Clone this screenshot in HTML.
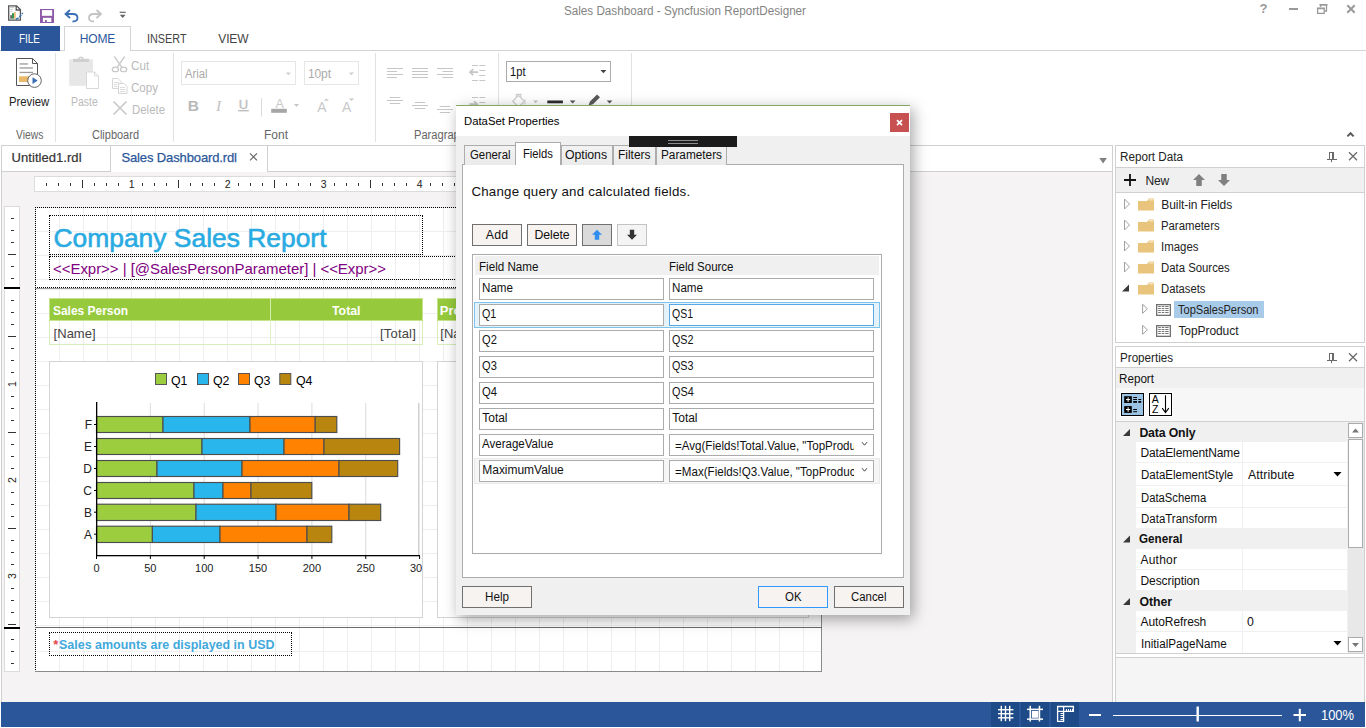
<!DOCTYPE html>
<html><head><meta charset="utf-8"><title>Sales Dashboard - Syncfusion ReportDesigner</title>
<style>
html,body{margin:0;padding:0;}
body{width:1366px;height:728px;overflow:hidden;position:relative;background:#fff;font-family:"Liberation Sans", sans-serif;}
div,svg,span.t{position:absolute;box-sizing:border-box;}
span.t{white-space:pre;}
svg{overflow:visible;}
</style></head><body>
<span class="t" style="left:564.00px;top:3.00px;font-size:12px;line-height:17px;color:#848484;transform:scaleX(0.9727);transform-origin:0 0;">Sales Dashboard - Syncfusion ReportDesigner</span>
<div style="left:0px;top:50px;width:1366px;height:1px;background:#d4d4d4;"></div>
<div style="left:1px;top:26px;width:59px;height:25px;background:#2b579a;"></div>
<span class="t" style="left:19.30px;top:31.00px;font-size:12px;line-height:17px;color:#fff;transform:scaleX(0.8286);transform-origin:0 0;">FILE</span>
<div style="left:64px;top:26px;width:67px;height:25px;background:#fff;border:1px solid #d4d4d4;border-bottom:none;"></div>
<span class="t" style="left:79.70px;top:31.00px;font-size:12px;line-height:17px;color:#2b579a;letter-spacing:-0.125px;">HOME</span>
<span class="t" style="left:147.00px;top:31.00px;font-size:12px;line-height:17px;color:#444;transform:scaleX(0.9019);transform-origin:0 0;">INSERT</span>
<span class="t" style="left:218.30px;top:31.00px;font-size:12px;line-height:17px;color:#444;letter-spacing:-0.168px;">VIEW</span>
<div style="left:55px;top:53px;width:1px;height:89px;background:#e1e1e1;"></div>
<div style="left:173px;top:53px;width:1px;height:89px;background:#e1e1e1;"></div>
<div style="left:375px;top:53px;width:1px;height:89px;background:#e1e1e1;"></div>
<div style="left:498px;top:53px;width:1px;height:89px;background:#e1e1e1;"></div>
<div style="left:631px;top:53px;width:1px;height:89px;background:#e1e1e1;"></div>
<span class="t" style="left:9.00px;top:94.00px;font-size:12px;line-height:17px;color:#222;transform:scaleX(0.9417);transform-origin:0 0;">Preview</span>
<span class="t" style="left:15.50px;top:127.00px;font-size:12px;line-height:17px;color:#666;transform:scaleX(0.8586);transform-origin:0 0;">Views</span>
<span class="t" style="left:70.80px;top:94.00px;font-size:12px;line-height:17px;color:#bababa;transform:scaleX(0.8701);transform-origin:0 0;">Paste</span>
<span class="t" style="left:131.00px;top:58.00px;font-size:12px;line-height:17px;color:#bababa;transform:scaleX(0.9739);transform-origin:0 0;">Cut</span>
<span class="t" style="left:131.00px;top:80.00px;font-size:12px;line-height:17px;color:#bababa;transform:scaleX(0.9637);transform-origin:0 0;">Copy</span>
<span class="t" style="left:131.80px;top:102.00px;font-size:12px;line-height:17px;color:#bababa;transform:scaleX(0.9514);transform-origin:0 0;">Delete</span>
<span class="t" style="left:92.00px;top:127.00px;font-size:12px;line-height:17px;color:#666;transform:scaleX(0.9148);transform-origin:0 0;">Clipboard</span>
<span class="t" style="left:263.99px;top:127.00px;font-size:12px;line-height:17px;color:#666;">Font</span>
<span class="t" style="left:414.00px;top:127.00px;font-size:12px;line-height:17px;color:#666;transform:scaleX(0.9278);transform-origin:0 0;">Paragraph</span>
<div style="left:181px;top:61px;width:115px;height:24px;background:#fff;border:1px solid #e6e6e6;"></div>
<span class="t" style="left:184.70px;top:66.00px;font-size:12px;line-height:17px;color:#aaa;transform:scaleX(0.9369);transform-origin:0 0;">Arial</span>
<div style="left:304px;top:61px;width:55px;height:24px;background:#fff;border:1px solid #e6e6e6;"></div>
<span class="t" style="left:307.90px;top:66.00px;font-size:12px;line-height:17px;color:#aaa;letter-spacing:-0.090px;">10pt</span>
<div style="left:506px;top:61px;width:105px;height:21px;background:#fff;border:1px solid #ababab;"></div>
<span class="t" style="left:510.00px;top:64.00px;font-size:12px;line-height:17px;color:#111;transform:scaleX(0.9288);transform-origin:0 0;">1pt</span>
<svg style="left:0px;top:0px;" width="1366" height="728" viewBox="0 0 1366 728"><path d="M8.7 5.8 H16.6 L20.4 9.6 V20.2 H8.7 Z" fill="#fff" stroke="#555" stroke-width="1.3"/><path d="M16.2 5.8 V10 H20.4" fill="none" stroke="#555" stroke-width="1.3"/><rect x="10.2" y="7" width="3.8" height="0.9" fill="#c9c9c9"/><rect x="10.2" y="9" width="3" height="0.9" fill="#c9c9c9"/><rect x="10.2" y="11" width="2" height="0.9" fill="#c9c9c9"/><rect x="10.2" y="15.2" width="1.8" height="3.5" fill="#666"/><rect x="12" y="13.2" width="2" height="5.5" fill="#3a9256"/><rect x="14" y="12" width="1.8" height="6.7" fill="#ecc27a"/><path d="M15.8 19.3 Q19 18.5 22.8 12.8" stroke="#3b73b4" stroke-width="1.5" fill="none" stroke-dasharray="3.2 1"/><rect x="40" y="9" width="14" height="14" fill="#8e5aa8"/><rect x="41.9" y="10.1" width="10.3" height="5.7" fill="#fff"/><rect x="42.9" y="17.8" width="8.4" height="4.2" fill="#fff"/><rect x="45.1" y="20" width="1.6" height="2" fill="#7a4a94"/><path d="M70 10 L65.5 14 L70 18" fill="none" stroke="#3b6fb5" stroke-width="1.8"/><path d="M66 14 H73 Q77.5 14 77.5 18 Q77.5 21.5 72.5 21.5" fill="none" stroke="#3b6fb5" stroke-width="1.8"/><path d="M96.5 10 L101 14 L96.5 18" fill="none" stroke="#c4c4c4" stroke-width="1.8"/><path d="M100.5 14 H93.5 Q89 14 89 18 Q89 21.5 94 21.5" fill="none" stroke="#c4c4c4" stroke-width="1.8"/><rect x="119.7" y="11.7" width="6" height="1.2" fill="#666"/><path d="M119.7 14.8 H125.7 L122.7 18 Z" fill="#666"/><rect x="1289" y="8" width="9" height="2" fill="#999"/><path d="M1320.5 7 V4.8 H1326.5 V11 H1325" fill="none" stroke="#999" stroke-width="1.3"/><rect x="1319.5" y="4" width="8" height="1.5" fill="#999"/><rect x="1317.6" y="8.4" width="6.6" height="5" fill="#fff" stroke="#999" stroke-width="1.3"/><rect x="1317" y="7.6" width="7.8" height="1.6" fill="#999"/><path d="M1347.3 5.3 L1354.7 12.7 M1354.7 5.3 L1347.3 12.7" stroke="#999" stroke-width="2"/><path d="M1347.4 136.4 L1350.5 133.2 L1353.6 136.4" fill="none" stroke="#5a5a5a" stroke-width="2"/></svg>
<span class="t" style="left:1259.52px;top:0.00px;font-size:13px;line-height:18px;color:#999;font-weight:700;">?</span>
<svg style="left:0px;top:0px;" width="1366" height="728" viewBox="0 0 1366 728"><path d="M16.5 58.5 H32.5 L37.5 63.5 V85.5 H16.5 Z" fill="#fff" stroke="#555" stroke-width="1"/><path d="M32.5 58.5 V63.5 H37.5" fill="none" stroke="#555" stroke-width="1"/><rect x="19.5" y="63.3" width="8.5" height="1.3" fill="#9a9a9a"/><rect x="19.5" y="67.3" width="13.5" height="1.3" fill="#9a9a9a"/><rect x="19.5" y="71.8" width="13.5" height="1.3" fill="#9a9a9a"/><rect x="19" y="76.3" width="11" height="5.7" fill="#e8b96a"/><circle cx="34.5" cy="80.6" r="6.8" fill="#fff" stroke="#666" stroke-width="1"/><path d="M32.5 77.3 L37.7 80.6 L32.5 83.9 Z" fill="#3b6fb5"/><rect x="69.2" y="59.3" width="23.7" height="26.5" fill="#e7e7e7"/><rect x="73" y="58.8" width="16" height="3.2" fill="#cfcfcf"/><path d="M78.5 59 Q81 55.5 83.5 59" fill="none" stroke="#cfcfcf" stroke-width="1.3"/><path d="M86.5 72 H94.5 L98.5 76 V88.5 H86.5 Z" fill="#fff" stroke="#d9d9d9" stroke-width="1"/><path d="M94.5 72 V76 H98.5" fill="none" stroke="#d9d9d9" stroke-width="1"/><g fill="none" stroke="#c9c9c9" stroke-width="1.3"><path d="M114.3 56.5 L122.3 67.8 M124.7 56.5 L116.7 67.8"/><ellipse cx="115.4" cy="69.4" rx="3.1" ry="2.3"/><ellipse cx="123.6" cy="69.4" rx="3.1" ry="2.3"/></g><g fill="#fff" stroke="#d6d6d6" stroke-width="1"><path d="M112.5 78.5 H118 L121 81.5 V88.5 H112.5 Z"/><path d="M118.5 83.5 H124 L127 86.5 V93.5 H118.5 Z"/></g><g stroke="#dcdcdc" stroke-width="1"><path d="M114 82.5 H119 M114 84.5 H117 M114 86.5 H117 M120 87.5 H125 M120 89.5 H125.5 M120 91.5 H125.5"/></g><path d="M113.5 101.5 L126.5 114.5 M126.5 101.5 L113.5 114.5" stroke="#c6c6c6" stroke-width="1.5" fill="none"/><path d="M285.8 72.5 H291 L288.4 75.2 Z" fill="#d0d0d0"/><path d="M348.8 72.5 H354 L351.4 75.2 Z" fill="#d0d0d0"/><path d="M600.4 70 H606.4 L603.4 73.2 Z" fill="#444"/><rect x="261" y="98" width="1" height="18.5" fill="#dadada"/><rect x="238.2" y="110" width="10.6" height="1.4" fill="#bdbdbd"/><rect x="271.2" y="108.8" width="15.6" height="4" fill="#a6a6a6"/><path d="M293.9 104 H299.1 L296.5 106.8 Z" fill="#c4c4c4"/><path d="M323.9 100.8 H329 L326.45 98.4 Z" fill="#c8c8c8"/><path d="M348.8 98.6 H354.2 L351.5 101 Z" fill="#c8c8c8"/><rect x="387.0" y="68.0" width="16" height="1" fill="#c6c6c6"/><rect x="387.0" y="71.0" width="10" height="1" fill="#c6c6c6"/><rect x="387.0" y="74.0" width="16" height="1" fill="#c6c6c6"/><rect x="387.0" y="77.0" width="10" height="1" fill="#c6c6c6"/><rect x="412.0" y="68.0" width="16" height="1" fill="#c6c6c6"/><rect x="412.0" y="71.0" width="16" height="1" fill="#c6c6c6"/><rect x="412.0" y="74.0" width="16" height="1" fill="#c6c6c6"/><rect x="412.0" y="77.0" width="16" height="1" fill="#c6c6c6"/><rect x="437.0" y="68.0" width="16" height="1" fill="#c6c6c6"/><rect x="442.5" y="71.0" width="10.5" height="1" fill="#c6c6c6"/><rect x="437.0" y="74.0" width="16" height="1" fill="#c6c6c6"/><rect x="442.5" y="77.0" width="10.5" height="1" fill="#c6c6c6"/><rect x="389.8" y="97.0" width="10.4" height="1" fill="#c6c6c6"/><rect x="387.0" y="100.0" width="16" height="1" fill="#c6c6c6"/><rect x="389.8" y="103.0" width="10.4" height="1" fill="#c6c6c6"/><rect x="414.8" y="102.0" width="10.4" height="1" fill="#c6c6c6"/><rect x="412.0" y="105.0" width="16" height="1" fill="#c6c6c6"/><rect x="414.8" y="108.0" width="10.4" height="1" fill="#c6c6c6"/><rect x="439.8" y="106.0" width="10.4" height="1" fill="#c6c6c6"/><rect x="437.0" y="109.0" width="16" height="1" fill="#c6c6c6"/><rect x="439.8" y="112.0" width="10.4" height="1" fill="#c6c6c6"/><rect x="472" y="65" width="6" height="1" fill="#c6c6c6"/><rect x="479.3" y="65" width="6" height="1" fill="#c6c6c6"/><rect x="479.3" y="70" width="6" height="1" fill="#c6c6c6"/><rect x="479.3" y="75" width="6" height="1" fill="#c6c6c6"/><rect x="472" y="80" width="6" height="1" fill="#c6c6c6"/><rect x="479.3" y="80" width="6" height="1" fill="#c6c6c6"/><path d="M478 72.2 H471 M473.3 69.2 L470 72.2 L473.3 75.2" stroke="#c6c6c6" stroke-width="1.8" fill="none"/><rect x="472" y="97" width="6" height="1" fill="#c6c6c6"/><rect x="479.3" y="97" width="6" height="1" fill="#c6c6c6"/><rect x="479.3" y="102" width="6" height="1" fill="#c6c6c6"/><rect x="479.3" y="107" width="6" height="1" fill="#c6c6c6"/><rect x="472" y="112" width="6" height="1" fill="#c6c6c6"/><rect x="479.3" y="112" width="6" height="1" fill="#c6c6c6"/><path d="M469.5 104.2 H476.5 M474 101.2 L477.3 104.2 L474 107.2" stroke="#c6c6c6" stroke-width="1.8" fill="none"/><path d="M512.8 101.3 L518.4 95.4 L524.4 101.3 L518.6 107.4 Z" fill="none" stroke="#cfcfcf" stroke-width="1.3"/><path d="M516.4 97 V94.3 H520.9 V97.6" fill="none" stroke="#cfcfcf" stroke-width="1.2"/><path d="M524.9 99.5 V104.5" stroke="#d6d6d6" stroke-width="1.3"/><path d="M533 100.5 H538.2 L535.6 103.3 Z" fill="#c4c4c4"/><rect x="547.3" y="100.5" width="15.6" height="2.8" fill="#2e2e2e"/><path d="M569.8 100.5 H575.5 L572.65 103.4 Z" fill="#555"/><path d="M588.5 105.5 L590 101.5 L597 94.5 L600 97.2 L593 104.2 Z" fill="#5a5a5a"/><path d="M606.7 100.5 H612.4 L609.55 103.4 Z" fill="#555"/></svg>
<span class="t" style="left:187.70px;top:95.00px;font-size:15.5px;line-height:22px;color:#b8b8b8;font-weight:700;">B</span>
<span class="t" style="left:216.01px;top:95.00px;font-size:15.5px;line-height:22px;color:#c2c2c2;font-family:'Liberation Serif', serif;font-style:italic;">I</span>
<span class="t" style="left:238.80px;top:96.00px;font-size:13px;line-height:18px;color:#bdbdbd;-webkit-text-stroke:0.3px #bdbdbd;">U</span>
<span class="t" style="left:275.53px;top:95.00px;font-size:12.5px;line-height:18px;color:#c8c8c8;">A</span>
<span class="t" style="left:317.20px;top:98.00px;font-size:13.8px;line-height:19px;color:#c8c8c8;">A</span>
<span class="t" style="left:342.00px;top:98.00px;font-size:13.8px;line-height:19px;color:#c8c8c8;">A</span>
<div style="left:1px;top:145px;width:1112px;height:557px;background:#f5f3f4;border:1px solid #d0d0d0;border-bottom:none;"></div>
<div style="left:2px;top:146px;width:1110px;height:26px;background:#fff;"></div>
<div style="left:2px;top:171px;width:108px;height:1px;background:#d0d0d0;"></div>
<div style="left:110px;top:146px;width:1px;height:26px;background:#d0d0d0;"></div>
<div style="left:267px;top:146px;width:1px;height:26px;background:#d0d0d0;"></div>
<div style="left:267px;top:171px;width:845px;height:1px;background:#d0d0d0;"></div>
<span class="t" style="left:11.60px;top:149.00px;font-size:13px;line-height:18px;color:#333;letter-spacing:0.048px;-webkit-text-stroke:0.2px #333;">Untitled1.rdl</span>
<span class="t" style="left:121.40px;top:149.00px;font-size:13px;line-height:18px;color:#2b579a;letter-spacing:-0.121px;-webkit-text-stroke:0.25px #2b579a;">Sales Dashboard.rdl</span>
<div style="left:34px;top:176px;width:800px;height:16px;background:#fff;border:1px solid #dcdcdc;"></div>
<svg style="left:0px;top:0px;" width="1366" height="728" viewBox="0 0 1366 728"><rect x="46" y="183" width="1" height="3" fill="#333"/><rect x="58" y="183" width="1" height="3" fill="#333"/><rect x="70" y="183" width="1" height="3" fill="#333"/><rect x="82" y="180" width="1" height="8" fill="#333"/><rect x="94" y="183" width="1" height="3" fill="#333"/><rect x="106" y="183" width="1" height="3" fill="#333"/><rect x="118" y="183" width="1" height="3" fill="#333"/><rect x="142" y="183" width="1" height="3" fill="#333"/><rect x="154" y="183" width="1" height="3" fill="#333"/><rect x="166" y="183" width="1" height="3" fill="#333"/><rect x="178" y="180" width="1" height="8" fill="#333"/><rect x="190" y="183" width="1" height="3" fill="#333"/><rect x="202" y="183" width="1" height="3" fill="#333"/><rect x="214" y="183" width="1" height="3" fill="#333"/><rect x="238" y="183" width="1" height="3" fill="#333"/><rect x="250" y="183" width="1" height="3" fill="#333"/><rect x="262" y="183" width="1" height="3" fill="#333"/><rect x="274" y="180" width="1" height="8" fill="#333"/><rect x="286" y="183" width="1" height="3" fill="#333"/><rect x="298" y="183" width="1" height="3" fill="#333"/><rect x="310" y="183" width="1" height="3" fill="#333"/><rect x="334" y="183" width="1" height="3" fill="#333"/><rect x="346" y="183" width="1" height="3" fill="#333"/><rect x="358" y="183" width="1" height="3" fill="#333"/><rect x="370" y="180" width="1" height="8" fill="#333"/><rect x="382" y="183" width="1" height="3" fill="#333"/><rect x="394" y="183" width="1" height="3" fill="#333"/><rect x="406" y="183" width="1" height="3" fill="#333"/><rect x="430" y="183" width="1" height="3" fill="#333"/><rect x="442" y="183" width="1" height="3" fill="#333"/><rect x="454" y="183" width="1" height="3" fill="#333"/><rect x="466" y="180" width="1" height="8" fill="#333"/><rect x="478" y="183" width="1" height="3" fill="#333"/><rect x="490" y="183" width="1" height="3" fill="#333"/><rect x="502" y="183" width="1" height="3" fill="#333"/><rect x="526" y="183" width="1" height="3" fill="#333"/><rect x="538" y="183" width="1" height="3" fill="#333"/><rect x="550" y="183" width="1" height="3" fill="#333"/><rect x="562" y="180" width="1" height="8" fill="#333"/><rect x="574" y="183" width="1" height="3" fill="#333"/><rect x="586" y="183" width="1" height="3" fill="#333"/><rect x="598" y="183" width="1" height="3" fill="#333"/><rect x="622" y="183" width="1" height="3" fill="#333"/><rect x="634" y="183" width="1" height="3" fill="#333"/><rect x="646" y="183" width="1" height="3" fill="#333"/><rect x="658" y="180" width="1" height="8" fill="#333"/><rect x="670" y="183" width="1" height="3" fill="#333"/><rect x="682" y="183" width="1" height="3" fill="#333"/><rect x="694" y="183" width="1" height="3" fill="#333"/><rect x="718" y="183" width="1" height="3" fill="#333"/><rect x="730" y="183" width="1" height="3" fill="#333"/><rect x="742" y="183" width="1" height="3" fill="#333"/><rect x="754" y="180" width="1" height="8" fill="#333"/><rect x="766" y="183" width="1" height="3" fill="#333"/><rect x="778" y="183" width="1" height="3" fill="#333"/><rect x="790" y="183" width="1" height="3" fill="#333"/><rect x="814" y="183" width="1" height="3" fill="#333"/><rect x="826" y="183" width="1" height="3" fill="#333"/></svg>
<span class="t" style="left:128.78px;top:177.00px;font-size:10.5px;line-height:15px;color:#222;">1</span>
<span class="t" style="left:224.78px;top:177.00px;font-size:10.5px;line-height:15px;color:#222;">2</span>
<span class="t" style="left:320.78px;top:177.00px;font-size:10.5px;line-height:15px;color:#222;">3</span>
<span class="t" style="left:416.78px;top:177.00px;font-size:10.5px;line-height:15px;color:#222;">4</span>
<span class="t" style="left:512.78px;top:177.00px;font-size:10.5px;line-height:15px;color:#222;">5</span>
<span class="t" style="left:608.78px;top:177.00px;font-size:10.5px;line-height:15px;color:#222;">6</span>
<span class="t" style="left:704.78px;top:177.00px;font-size:10.5px;line-height:15px;color:#222;">7</span>
<span class="t" style="left:800.78px;top:177.00px;font-size:10.5px;line-height:15px;color:#222;">8</span>
<div style="left:4px;top:206px;width:16px;height:466px;background:#fff;border:1px solid #dcdcdc;"></div>
<svg style="left:0px;top:0px;" width="1366" height="728" viewBox="0 0 1366 728"><rect x="11" y="218" width="3" height="1" fill="#333"/><rect x="11" y="230" width="3" height="1" fill="#333"/><rect x="11" y="242" width="3" height="1" fill="#333"/><rect x="8" y="254" width="8" height="1" fill="#333"/><rect x="11" y="266" width="3" height="1" fill="#333"/><rect x="11" y="278" width="3" height="1" fill="#333"/><rect x="11" y="300" width="3" height="1" fill="#333"/><rect x="11" y="312" width="3" height="1" fill="#333"/><rect x="11" y="324" width="3" height="1" fill="#333"/><rect x="8" y="336" width="8" height="1" fill="#333"/><rect x="11" y="348" width="3" height="1" fill="#333"/><rect x="11" y="360" width="3" height="1" fill="#333"/><rect x="11" y="372" width="3" height="1" fill="#333"/><rect x="11" y="396" width="3" height="1" fill="#333"/><rect x="11" y="408" width="3" height="1" fill="#333"/><rect x="11" y="420" width="3" height="1" fill="#333"/><rect x="8" y="432" width="8" height="1" fill="#333"/><rect x="11" y="444" width="3" height="1" fill="#333"/><rect x="11" y="456" width="3" height="1" fill="#333"/><rect x="11" y="468" width="3" height="1" fill="#333"/><rect x="11" y="492" width="3" height="1" fill="#333"/><rect x="11" y="504" width="3" height="1" fill="#333"/><rect x="11" y="516" width="3" height="1" fill="#333"/><rect x="8" y="528" width="8" height="1" fill="#333"/><rect x="11" y="540" width="3" height="1" fill="#333"/><rect x="11" y="552" width="3" height="1" fill="#333"/><rect x="11" y="564" width="3" height="1" fill="#333"/><rect x="11" y="588" width="3" height="1" fill="#333"/><rect x="11" y="600" width="3" height="1" fill="#333"/><rect x="11" y="612" width="3" height="1" fill="#333"/><rect x="8" y="624" width="8" height="1" fill="#333"/><rect x="11" y="639" width="3" height="1" fill="#333"/><rect x="11" y="651" width="3" height="1" fill="#333"/><rect x="11" y="663" width="3" height="1" fill="#333"/><rect x="4" y="287" width="16" height="2" fill="#000"/><rect x="4" y="627" width="16" height="2" fill="#000"/></svg>
<span class="t" style="left:6px;top:377px;width:12px;height:14px;font-size:10.5px;line-height:14px;color:#222;text-align:center;transform:rotate(-90deg);">1</span>
<span class="t" style="left:6px;top:473px;width:12px;height:14px;font-size:10.5px;line-height:14px;color:#222;text-align:center;transform:rotate(-90deg);">2</span>
<span class="t" style="left:6px;top:569px;width:12px;height:14px;font-size:10.5px;line-height:14px;color:#222;text-align:center;transform:rotate(-90deg);">3</span>
<div style="left:35px;top:207px;width:787px;height:81px;background:#fff;background-image:linear-gradient(to right,#eeeeee 1px,transparent 1px),linear-gradient(to bottom,#eeeeee 1px,transparent 1px);background-size:24px 24px;background-position:0 0px;"></div>
<div style="left:35px;top:288px;width:787px;height:339px;background:#fff;background-image:linear-gradient(to right,#eeeeee 1px,transparent 1px),linear-gradient(to bottom,#eeeeee 1px,transparent 1px);background-size:24px 24px;background-position:0 1px;"></div>
<div style="left:35px;top:627px;width:787px;height:44px;background:#fff;background-image:linear-gradient(to right,#eeeeee 1px,transparent 1px),linear-gradient(to bottom,#eeeeee 1px,transparent 1px);background-size:24px 24px;background-position:0 0px;"></div>
<div style="left:35px;top:207px;width:787px;height:465px;border-top:1px dotted #000;border-left:1px dotted #000;"></div>
<div style="left:821px;top:207px;width:1px;height:465px;background:#8a8a8a;"></div>
<div style="left:35px;top:287px;width:787px;height:1px;border-top:1px dotted #000;"></div>
<div style="left:35px;top:288px;width:787px;height:1px;background:#9a9a9a;"></div>
<div style="left:35px;top:627px;width:787px;height:1px;background:#6a6a6a;"></div>
<div style="left:35px;top:671px;width:787px;height:1px;background:#8a8a8a;"></div>
<div style="left:49px;top:215px;width:374px;height:40px;border:1px dotted #000;"></div>
<span class="t" style="left:53.50px;top:220.00px;font-size:26.4px;line-height:37px;color:#29abe2;letter-spacing:0.008px;-webkit-text-stroke:0.6px #29abe2;">Company Sales Report</span>
<div style="left:49px;top:256px;width:770px;height:24px;border:1px dotted #000;"></div>
<span class="t" style="left:53.00px;top:258.00px;font-size:15px;line-height:21px;color:#800080;letter-spacing:-0.042px;">&lt;&lt;Expr&gt;&gt; | [@SalesPersonParameter] | &lt;&lt;Expr&gt;&gt;</span>
<div style="left:49px;top:298px;width:374px;height:23px;background:#96ca3c;border:1px solid #c5e38a;"></div>
<div style="left:270px;top:298px;width:1px;height:23px;background:#d5ecaa;"></div>
<div style="left:49px;top:321px;width:374px;height:24px;border:1px solid #d9ecb9;border-top:none;"></div>
<div style="left:270px;top:321px;width:1px;height:23px;background:#e3f1c9;"></div>
<span class="t" style="left:52.90px;top:302.00px;font-size:13px;line-height:18px;color:#fff;font-weight:700;transform:scaleX(0.9185);transform-origin:0 0;">Sales Person</span>
<span class="t" style="left:332.25px;top:302.00px;font-size:13px;line-height:18px;color:#fff;font-weight:700;transform:scaleX(0.9470);transform-origin:0 0;">Total</span>
<span class="t" style="left:53.60px;top:325.00px;font-size:13px;line-height:18px;color:#444;letter-spacing:0.016px;">[Name]</span>
<span class="t" style="left:380.00px;top:325.00px;font-size:13px;line-height:18px;color:#444;letter-spacing:0.188px;">[Total]</span>
<div style="left:437px;top:298px;width:372px;height:23px;background:#96ca3c;border:1px solid #c5e38a;"></div>
<div style="left:437px;top:321px;width:372px;height:24px;border:1px solid #d9ecb9;border-top:none;"></div>
<span class="t" style="left:439.80px;top:302.00px;font-size:13px;line-height:18px;color:#fff;font-weight:700;">Product</span>
<span class="t" style="left:440.30px;top:325.00px;font-size:13px;line-height:18px;color:#444;letter-spacing:0.016px;">[Name]</span>
<div style="left:49px;top:361px;width:374px;height:257px;background:#fff;border:1px solid #d4d4d4;"></div>
<div style="left:437px;top:361px;width:372px;height:257px;background:#fff;border:1px solid #d4d4d4;"></div>
<div style="left:49px;top:632px;width:243px;height:24px;border:1px dotted #000;"></div>
<span class="t" style="left:53.30px;top:636.00px;font-size:13px;line-height:18px;color:#e2474b;font-weight:700;">*</span>
<span class="t" style="left:58.80px;top:636.00px;font-size:13px;line-height:18px;color:#3fa9dc;font-weight:700;transform:scaleX(0.9590);transform-origin:0 0;">Sales amounts are displayed in USD</span>
<svg style="left:0px;top:0px;" width="1366" height="728" viewBox="0 0 1366 728"><rect x="149.85" y="403" width="1" height="153" fill="#dcdcdc"/><rect x="203.70" y="403" width="1" height="153" fill="#dcdcdc"/><rect x="257.55" y="403" width="1" height="153" fill="#dcdcdc"/><rect x="311.40" y="403" width="1" height="153" fill="#dcdcdc"/><rect x="365.25" y="403" width="1" height="153" fill="#dcdcdc"/><rect x="418" y="403" width="1.5" height="153" fill="#d0d0d0"/><rect x="96.5" y="416.5" width="66.5" height="16" fill="#9bcd3f" stroke="#4d4d4d" stroke-width="1.15"/><rect x="163.0" y="416.5" width="87.0" height="16" fill="#29b6ec" stroke="#4d4d4d" stroke-width="1.15"/><rect x="250.0" y="416.5" width="65.2" height="16" fill="#ff8200" stroke="#4d4d4d" stroke-width="1.15"/><rect x="315.2" y="416.5" width="21.6" height="16" fill="#b8860f" stroke="#4d4d4d" stroke-width="1.15"/><rect x="94" y="424.0" width="3" height="1" fill="#000"/><rect x="96.5" y="438.5" width="105.5" height="16" fill="#9bcd3f" stroke="#4d4d4d" stroke-width="1.15"/><rect x="202.0" y="438.5" width="82.0" height="16" fill="#29b6ec" stroke="#4d4d4d" stroke-width="1.15"/><rect x="284.0" y="438.5" width="40.0" height="16" fill="#ff8200" stroke="#4d4d4d" stroke-width="1.15"/><rect x="324.0" y="438.5" width="75.6" height="16" fill="#b8860f" stroke="#4d4d4d" stroke-width="1.15"/><rect x="94" y="446.0" width="3" height="1" fill="#000"/><rect x="96.5" y="460.5" width="60.5" height="16" fill="#9bcd3f" stroke="#4d4d4d" stroke-width="1.15"/><rect x="157.0" y="460.5" width="85.0" height="16" fill="#29b6ec" stroke="#4d4d4d" stroke-width="1.15"/><rect x="242.0" y="460.5" width="97.0" height="16" fill="#ff8200" stroke="#4d4d4d" stroke-width="1.15"/><rect x="339.0" y="460.5" width="58.7" height="16" fill="#b8860f" stroke="#4d4d4d" stroke-width="1.15"/><rect x="94" y="468.0" width="3" height="1" fill="#000"/><rect x="96.5" y="482.5" width="97.5" height="16" fill="#9bcd3f" stroke="#4d4d4d" stroke-width="1.15"/><rect x="194.0" y="482.5" width="29.0" height="16" fill="#29b6ec" stroke="#4d4d4d" stroke-width="1.15"/><rect x="223.0" y="482.5" width="28.0" height="16" fill="#ff8200" stroke="#4d4d4d" stroke-width="1.15"/><rect x="251.0" y="482.5" width="60.8" height="16" fill="#b8860f" stroke="#4d4d4d" stroke-width="1.15"/><rect x="94" y="490.0" width="3" height="1" fill="#000"/><rect x="96.5" y="504.2" width="99.5" height="16.3" fill="#9bcd3f" stroke="#4d4d4d" stroke-width="1.15"/><rect x="196.0" y="504.2" width="80.0" height="16.3" fill="#29b6ec" stroke="#4d4d4d" stroke-width="1.15"/><rect x="276.0" y="504.2" width="73.0" height="16.3" fill="#ff8200" stroke="#4d4d4d" stroke-width="1.15"/><rect x="349.0" y="504.2" width="31.7" height="16.3" fill="#b8860f" stroke="#4d4d4d" stroke-width="1.15"/><rect x="94" y="511.7" width="3" height="1" fill="#000"/><rect x="96.5" y="526.2" width="55.9" height="16.3" fill="#9bcd3f" stroke="#4d4d4d" stroke-width="1.15"/><rect x="152.4" y="526.2" width="67.6" height="16.3" fill="#29b6ec" stroke="#4d4d4d" stroke-width="1.15"/><rect x="220.0" y="526.2" width="87.0" height="16.3" fill="#ff8200" stroke="#4d4d4d" stroke-width="1.15"/><rect x="307.0" y="526.2" width="24.8" height="16.3" fill="#b8860f" stroke="#4d4d4d" stroke-width="1.15"/><rect x="94" y="533.7" width="3" height="1" fill="#000"/><rect x="96" y="402" width="1.3" height="154" fill="#000"/><rect x="96" y="555" width="324" height="1.3" fill="#000"/><rect x="96.00" y="556" width="1" height="3" fill="#000"/><rect x="149.85" y="556" width="1" height="3" fill="#000"/><rect x="203.70" y="556" width="1" height="3" fill="#000"/><rect x="257.55" y="556" width="1" height="3" fill="#000"/><rect x="311.40" y="556" width="1" height="3" fill="#000"/><rect x="365.25" y="556" width="1" height="3" fill="#000"/><rect x="419.10" y="556" width="1" height="3" fill="#000"/></svg>
<span class="t" style="left:84.66px;top:417.00px;font-size:12px;line-height:17px;color:#222;">F</span>
<span class="t" style="left:83.98px;top:439.00px;font-size:12px;line-height:17px;color:#222;">E</span>
<span class="t" style="left:83.33px;top:461.00px;font-size:12px;line-height:17px;color:#222;">D</span>
<span class="t" style="left:83.33px;top:483.00px;font-size:12px;line-height:17px;color:#222;">C</span>
<span class="t" style="left:83.98px;top:505.00px;font-size:12px;line-height:17px;color:#222;">B</span>
<span class="t" style="left:83.98px;top:527.00px;font-size:12px;line-height:17px;color:#222;">A</span>
<span class="t" style="left:93.44px;top:561.00px;font-size:11px;line-height:15px;color:#222;">0</span>
<span class="t" style="left:144.22px;top:561.00px;font-size:11px;line-height:15px;color:#222;">50</span>
<span class="t" style="left:195.02px;top:561.00px;font-size:11px;line-height:15px;color:#222;">100</span>
<span class="t" style="left:248.87px;top:561.00px;font-size:11px;line-height:15px;color:#222;">150</span>
<span class="t" style="left:302.72px;top:561.00px;font-size:11px;line-height:15px;color:#222;">200</span>
<span class="t" style="left:356.57px;top:561.00px;font-size:11px;line-height:15px;color:#222;">250</span>
<span class="t" style="left:410.00px;top:561.00px;font-size:11px;line-height:15px;color:#222;">30</span>
<span class="t" style="left:171.30px;top:372.00px;font-size:13px;line-height:18px;color:#000;transform:scaleX(0.9514);transform-origin:0 0;">Q1</span>
<span class="t" style="left:213.30px;top:372.00px;font-size:13px;line-height:18px;color:#000;transform:scaleX(0.9514);transform-origin:0 0;">Q2</span>
<span class="t" style="left:254.30px;top:372.00px;font-size:13px;line-height:18px;color:#000;transform:scaleX(0.9514);transform-origin:0 0;">Q3</span>
<span class="t" style="left:295.60px;top:372.00px;font-size:13px;line-height:18px;color:#000;transform:scaleX(0.9514);transform-origin:0 0;">Q4</span>
<svg style="left:0px;top:0px;" width="1366" height="728" viewBox="0 0 1366 728"><rect x="155.5" y="373.5" width="11" height="11" fill="#9bcd3f" stroke="#555" stroke-width="1"/><rect x="197.5" y="373.5" width="11" height="11" fill="#29b6ec" stroke="#555" stroke-width="1"/><rect x="238.5" y="373.5" width="11" height="11" fill="#ff8200" stroke="#555" stroke-width="1"/><rect x="279.8" y="373.5" width="11" height="11" fill="#b8860f" stroke="#555" stroke-width="1"/></svg>
<div style="left:1115px;top:145px;width:250px;height:198px;background:#fff;border:1px solid #d0d0d0;"></div>
<div style="left:1116px;top:167px;width:248px;height:1px;background:#d0d0d0;"></div>
<div style="left:1116px;top:168px;width:248px;height:24px;background:#f0f0f0;"></div>
<div style="left:1116px;top:192px;width:248px;height:1px;background:#d0d0d0;"></div>
<span class="t" style="left:1120.40px;top:149.00px;font-size:12px;line-height:17px;color:#222;transform:scaleX(0.9737);transform-origin:0 0;">Report Data</span>
<span class="t" style="left:1145.50px;top:173.00px;font-size:12px;line-height:17px;color:#222;letter-spacing:-0.172px;">New</span>
<span class="t" style="left:1161.30px;top:197.00px;font-size:12px;line-height:17px;color:#222;letter-spacing:-0.082px;">Built-in Fields</span>
<span class="t" style="left:1161.30px;top:218.00px;font-size:12px;line-height:17px;color:#222;transform:scaleX(0.9447);transform-origin:0 0;">Parameters</span>
<span class="t" style="left:1161.30px;top:239.00px;font-size:12px;line-height:17px;color:#222;transform:scaleX(0.9553);transform-origin:0 0;">Images</span>
<span class="t" style="left:1161.30px;top:260.00px;font-size:12px;line-height:17px;color:#222;transform:scaleX(0.9463);transform-origin:0 0;">Data Sources</span>
<span class="t" style="left:1161.30px;top:281.00px;font-size:12px;line-height:17px;color:#222;transform:scaleX(0.9396);transform-origin:0 0;">Datasets</span>
<div style="left:1174px;top:301px;width:90px;height:17px;background:#a9cbea;"></div>
<span class="t" style="left:1178.40px;top:302.00px;font-size:12px;line-height:17px;color:#222;transform:scaleX(0.9212);transform-origin:0 0;">TopSalesPerson</span>
<span class="t" style="left:1178.40px;top:323.00px;font-size:12px;line-height:17px;color:#222;letter-spacing:-0.070px;">TopProduct</span>
<div style="left:1115px;top:346px;width:250px;height:356px;background:#f5f5f5;border:1px solid #d0d0d0;border-bottom:none;"></div>
<div style="left:1116px;top:347px;width:248px;height:20px;background:#fff;"></div>
<div style="left:1116px;top:367px;width:248px;height:1px;background:#d0d0d0;"></div>
<div style="left:1116px;top:368px;width:248px;height:20px;background:#f0f0f0;"></div>
<div style="left:1116px;top:388px;width:248px;height:33px;background:#f7f7f7;"></div>
<div style="left:1116px;top:421px;width:248px;height:1px;background:#d0d0d0;"></div>
<span class="t" style="left:1120.00px;top:350.00px;font-size:12px;line-height:17px;color:#222;transform:scaleX(0.9689);transform-origin:0 0;">Properties</span>
<span class="t" style="left:1118.70px;top:371.00px;font-size:12px;line-height:17px;color:#111;transform:scaleX(0.9714);transform-origin:0 0;">Report</span>
<svg style="left:0px;top:0px;" width="1366" height="728" viewBox="0 0 1366 728"><g fill="#6a6a6a"><rect x="1329" y="152" width="5" height="1"/><rect x="1329" y="152" width="1" height="7"/><rect x="1332" y="152" width="2" height="7"/><rect x="1327" y="159" width="10" height="1"/><rect x="1331" y="160" width="1" height="2.2"/></g><path d="M1349 152.2 L1357 160.2 M1357 152.2 L1349 160.2" stroke="#6a6a6a" stroke-width="1.25" fill="none"/><g fill="#6a6a6a"><rect x="1329" y="353" width="5" height="1"/><rect x="1329" y="353" width="1" height="7"/><rect x="1332" y="353" width="2" height="7"/><rect x="1327" y="360" width="10" height="1"/><rect x="1331" y="361" width="1" height="2.2"/></g><path d="M1349 353.2 L1357 361.2 M1357 353.2 L1349 361.2" stroke="#6a6a6a" stroke-width="1.25" fill="none"/></svg>
<svg style="left:0px;top:0px;" width="1366" height="728" viewBox="0 0 1366 728"><path d="M1124 180 H1136 M1130 174 V186" stroke="#111" stroke-width="1.8"/><path d="M1199 174.0 L1205.0 180 L1201.75 180 L1201.75 186.0 L1196.25 186.0 L1196.25 180 L1193.0 180 Z" fill="#808080"/><path d="M1224 186.0 L1230.0 180 L1226.75 180 L1226.75 174.0 L1221.25 174.0 L1221.25 180 L1218.0 180 Z" fill="#808080"/></svg>
<svg style="left:0px;top:0px;" width="1366" height="728" viewBox="0 0 1366 728"><path d="M1124.5 199.0 L1129.5 204.0 L1124.5 209.0 Z" fill="#fff" stroke="#a0a0a0" stroke-width="1"/><path d="M1138 201.0 L1147 201.0 L1149 198.5 L1154 198.5 L1154 210.5 L1138 210.5 Z" fill="#e9c47c"/><path d="M1149.5 199.0 L1153.5 199.0 L1153.5 200.5 L1148.5 200.5 Z" fill="#f6e3b9"/><path d="M1124.5 220.0 L1129.5 225.0 L1124.5 230.0 Z" fill="#fff" stroke="#a0a0a0" stroke-width="1"/><path d="M1138 222.0 L1147 222.0 L1149 219.5 L1154 219.5 L1154 231.5 L1138 231.5 Z" fill="#e9c47c"/><path d="M1149.5 220.0 L1153.5 220.0 L1153.5 221.5 L1148.5 221.5 Z" fill="#f6e3b9"/><path d="M1124.5 241.0 L1129.5 246.0 L1124.5 251.0 Z" fill="#fff" stroke="#a0a0a0" stroke-width="1"/><path d="M1138 243.0 L1147 243.0 L1149 240.5 L1154 240.5 L1154 252.5 L1138 252.5 Z" fill="#e9c47c"/><path d="M1149.5 241.0 L1153.5 241.0 L1153.5 242.5 L1148.5 242.5 Z" fill="#f6e3b9"/><path d="M1124.5 262.0 L1129.5 267.0 L1124.5 272.0 Z" fill="#fff" stroke="#a0a0a0" stroke-width="1"/><path d="M1138 264.0 L1147 264.0 L1149 261.5 L1154 261.5 L1154 273.5 L1138 273.5 Z" fill="#e9c47c"/><path d="M1149.5 262.0 L1153.5 262.0 L1153.5 263.5 L1148.5 263.5 Z" fill="#f6e3b9"/><path d="M1129 284.5 L1129 291.5 L1122 291.5 Z" fill="#3a3a3a"/><path d="M1138 285.0 L1147 285.0 L1149 282.5 L1154 282.5 L1154 294.5 L1138 294.5 Z" fill="#e9c47c"/><path d="M1149.5 283.0 L1153.5 283.0 L1153.5 284.5 L1148.5 284.5 Z" fill="#f6e3b9"/><path d="M1142.6 304.3 L1147.4 308.8 L1142.6 313.3 Z" fill="#fff" stroke="#a0a0a0" stroke-width="1"/><rect x="1156.65" y="304.65" width="13.7" height="10.7" fill="#fff" stroke="#707070" stroke-width="1.3"/><rect x="1158.2" y="306" width="2.6" height="1" fill="#777"/><rect x="1161.7" y="306" width="2.6" height="1" fill="#777"/><rect x="1165.2" y="306" width="3.4" height="1" fill="#777"/><rect x="1158.2" y="308" width="2.6" height="1" fill="#777"/><rect x="1161.7" y="308" width="2.6" height="1" fill="#777"/><rect x="1165.2" y="308" width="3.4" height="1" fill="#777"/><rect x="1158.2" y="310" width="2.6" height="1" fill="#777"/><rect x="1161.7" y="310" width="2.6" height="1" fill="#777"/><rect x="1165.2" y="310" width="3.4" height="1" fill="#777"/><rect x="1158.2" y="312" width="2.6" height="1" fill="#777"/><rect x="1161.7" y="312" width="2.6" height="1" fill="#777"/><rect x="1165.2" y="312" width="3.4" height="1" fill="#777"/><path d="M1142.6 325.3 L1147.4 329.8 L1142.6 334.3 Z" fill="#fff" stroke="#a0a0a0" stroke-width="1"/><rect x="1156.65" y="325.65" width="13.7" height="10.7" fill="#fff" stroke="#707070" stroke-width="1.3"/><rect x="1158.2" y="327" width="2.6" height="1" fill="#777"/><rect x="1161.7" y="327" width="2.6" height="1" fill="#777"/><rect x="1165.2" y="327" width="3.4" height="1" fill="#777"/><rect x="1158.2" y="329" width="2.6" height="1" fill="#777"/><rect x="1161.7" y="329" width="2.6" height="1" fill="#777"/><rect x="1165.2" y="329" width="3.4" height="1" fill="#777"/><rect x="1158.2" y="331" width="2.6" height="1" fill="#777"/><rect x="1161.7" y="331" width="2.6" height="1" fill="#777"/><rect x="1165.2" y="331" width="3.4" height="1" fill="#777"/><rect x="1158.2" y="333" width="2.6" height="1" fill="#777"/><rect x="1161.7" y="333" width="2.6" height="1" fill="#777"/><rect x="1165.2" y="333" width="3.4" height="1" fill="#777"/></svg>
<svg style="left:0px;top:0px;" width="1366" height="728" viewBox="0 0 1366 728"><path d="M1099.3 158 L1106.9 158 L1103.1 163.6 Z" fill="#808080"/></svg>
<svg style="left:0px;top:0px;" width="1366" height="728" viewBox="0 0 1366 728"><path d="M250 153.3 L257 160.3 M257 153.3 L250 160.3" stroke="#6a6a6a" stroke-width="1.2"/></svg>
<div style="left:1120px;top:392px;width:25px;height:25px;background:#fff;"></div>
<div style="left:1148px;top:392px;width:25px;height:25px;background:#fff;"></div>
<div style="left:1121px;top:393px;width:23px;height:23px;background:#9bc3e4;border:1.2px solid #000;"></div>
<div style="left:1149px;top:393px;width:23px;height:23px;background:#fff;border:1.2px solid #000;"></div>
<svg style="left:0px;top:0px;" width="1366" height="728" viewBox="0 0 1366 728"><rect x="1124.2" y="396.2" width="7.6" height="6.8" fill="#000"/><rect x="1126" y="399.09999999999997" width="4.2" height="1" fill="#fff"/><rect x="1127.6" y="397.3" width="1" height="4.6" fill="#fff"/><rect x="1124.2" y="406.1" width="7.6" height="6.8" fill="#000"/><rect x="1126" y="409.0" width="4.2" height="1" fill="#fff"/><rect x="1127.6" y="407.20000000000005" width="1" height="4.6" fill="#fff"/><rect x="1133.2" y="397" width="3.8" height="1" fill="#000"/><rect x="1133.2" y="399" width="3.8" height="1" fill="#000"/><rect x="1138.3" y="399" width="2.9" height="1" fill="#000"/><rect x="1133.2" y="401" width="3.8" height="1.8" fill="#000"/><rect x="1138.3" y="401" width="2.9" height="1.8" fill="#000"/><rect x="1133.2" y="409" width="3.8" height="1" fill="#000"/><rect x="1133.2" y="411.2" width="3.8" height="1" fill="#000"/><path d="M1165.5 395.2 V412.5 M1162.2 408.2 L1165.5 412.6 L1168.8 408.2" stroke="#000" stroke-width="1.1" fill="none"/></svg>
<span class="t" style="left:1151.69px;top:392.00px;font-size:10.5px;line-height:15px;color:#000;">A</span>
<span class="t" style="left:1151.99px;top:402.00px;font-size:10.5px;line-height:15px;color:#000;">Z</span>
<div style="left:1116px;top:422px;width:232px;height:231px;background:#f0f0f0;"></div>
<div style="left:1116px;top:653px;width:248px;height:1px;background:#d0d0d0;"></div>
<div style="left:1116px;top:657px;width:248px;height:1px;background:#d0d0d0;"></div>
<div style="left:1116px;top:654px;width:248px;height:3px;background:#fff;"></div>
<span class="t" style="left:1139.40px;top:425.00px;font-size:12.3px;line-height:17px;color:#111;font-weight:700;letter-spacing:-0.156px;">Data Only</span>
<div style="left:1136px;top:442px;width:106px;height:20px;background:#fff;"></div>
<div style="left:1243px;top:442px;width:104px;height:20px;background:#fff;"></div>
<span class="t" style="left:1140.50px;top:445.00px;font-size:12px;line-height:17px;color:#111;letter-spacing:-0.146px;">DataElementName</span>
<div style="left:1136px;top:463px;width:106px;height:22px;background:#fff;"></div>
<div style="left:1243px;top:463px;width:104px;height:22px;background:#fff;"></div>
<span class="t" style="left:1140.50px;top:467.00px;font-size:12px;line-height:17px;color:#111;transform:scaleX(0.9599);transform-origin:0 0;">DataElementStyle</span>
<div style="left:1136px;top:486px;width:106px;height:21px;background:#fff;"></div>
<div style="left:1243px;top:486px;width:104px;height:21px;background:#fff;"></div>
<span class="t" style="left:1140.50px;top:490.00px;font-size:12px;line-height:17px;color:#111;transform:scaleX(0.9398);transform-origin:0 0;">DataSchema</span>
<div style="left:1136px;top:508px;width:106px;height:20px;background:#fff;"></div>
<div style="left:1243px;top:508px;width:104px;height:20px;background:#fff;"></div>
<span class="t" style="left:1140.50px;top:511.00px;font-size:12px;line-height:17px;color:#111;transform:scaleX(0.9575);transform-origin:0 0;">DataTransform</span>
<span class="t" style="left:1139.40px;top:531.00px;font-size:12.3px;line-height:17px;color:#111;font-weight:700;transform:scaleX(0.9498);transform-origin:0 0;">General</span>
<div style="left:1136px;top:549px;width:106px;height:20px;background:#fff;"></div>
<div style="left:1243px;top:549px;width:104px;height:20px;background:#fff;"></div>
<span class="t" style="left:1140.50px;top:552.00px;font-size:12px;line-height:17px;color:#111;letter-spacing:0.223px;">Author</span>
<div style="left:1136px;top:570px;width:106px;height:20px;background:#fff;"></div>
<div style="left:1243px;top:570px;width:104px;height:20px;background:#fff;"></div>
<span class="t" style="left:1140.50px;top:573.00px;font-size:12px;line-height:17px;color:#111;letter-spacing:-0.076px;">Description</span>
<span class="t" style="left:1139.40px;top:594.00px;font-size:12.3px;line-height:17px;color:#111;font-weight:700;letter-spacing:-0.059px;">Other</span>
<div style="left:1136px;top:611px;width:106px;height:20px;background:#fff;"></div>
<div style="left:1243px;top:611px;width:104px;height:20px;background:#fff;"></div>
<span class="t" style="left:1140.50px;top:614.00px;font-size:12px;line-height:17px;color:#111;letter-spacing:-0.091px;">AutoRefresh</span>
<div style="left:1136px;top:632px;width:106px;height:21px;background:#fff;"></div>
<div style="left:1243px;top:632px;width:104px;height:21px;background:#fff;"></div>
<span class="t" style="left:1140.50px;top:636.00px;font-size:12px;line-height:17px;color:#111;transform:scaleX(0.9732);transform-origin:0 0;">InitialPageName</span>
<svg style="left:0px;top:0px;" width="1366" height="728" viewBox="0 0 1366 728"><path d="M1130 429.0 L1130 436.0 L1123 436.0 Z" fill="#3a3a3a"/><path d="M1130 535.5 L1130 542.5 L1123 542.5 Z" fill="#3a3a3a"/><path d="M1130 598.0 L1130 605.0 L1123 605.0 Z" fill="#3a3a3a"/></svg>
<span class="t" style="left:1248.00px;top:467.00px;font-size:12.3px;line-height:17px;color:#111;letter-spacing:0.078px;">Attribute</span>
<span class="t" style="left:1247.00px;top:614.00px;font-size:12.3px;line-height:17px;color:#111;">0</span>
<svg style="left:0px;top:0px;" width="1366" height="728" viewBox="0 0 1366 728"><path d="M1333.5 472 L1341.5 472 L1337.5 476.5 Z" fill="#000"/><path d="M1333.5 641 L1341.5 641 L1337.5 645.5 Z" fill="#000"/></svg>
<div style="left:1348px;top:422px;width:16px;height:231px;background:#e8e8e8;"></div>
<div style="left:1348px;top:423px;width:15px;height:15px;background:#fff;border:1px solid #ababab;"></div>
<div style="left:1348px;top:637px;width:15px;height:15px;background:#fff;border:1px solid #ababab;"></div>
<div style="left:1348px;top:439px;width:15px;height:109px;background:#fff;border:1px solid #ababab;"></div>
<svg style="left:0px;top:0px;" width="1366" height="728" viewBox="0 0 1366 728"><path d="M1352 432.5 L1359 432.5 L1355.5 428.5 Z" fill="#777"/><path d="M1352 643 L1359 643 L1355.5 647 Z" fill="#777"/></svg>
<div style="left:1px;top:702px;width:1364px;height:25px;background:#2b579a;"></div>
<svg style="left:0px;top:0px;" width="1366" height="728" viewBox="0 0 1366 728"><rect x="991" y="702" width="28" height="25" fill="#1e4b87"/><rect x="1021" y="702" width="28" height="25" fill="#1e4b87"/><rect x="1051" y="702" width="28" height="25" fill="#1e4b87"/><rect x="1000.6" y="705.8" width="1.4" height="15.4" fill="#fff"/><rect x="998" y="709.0" width="15.4" height="1.4" fill="#fff"/><rect x="1004.8" y="705.8" width="1.4" height="15.4" fill="#fff"/><rect x="998" y="713.0" width="15.4" height="1.4" fill="#fff"/><rect x="1009.0" y="705.8" width="1.4" height="15.4" fill="#fff"/><rect x="998" y="717.1" width="15.4" height="1.4" fill="#fff"/><rect x="1029.5" y="705.8" width="1.5" height="15.7" fill="#fff"/><rect x="1038.7" y="705.8" width="1.5" height="15.7" fill="#fff"/><rect x="1027" y="708.6" width="16" height="1.5" fill="#fff"/><rect x="1027" y="718.4" width="16" height="1.5" fill="#fff"/><rect x="1031.8" y="710.9" width="6.6" height="6.9" fill="#fff"/><path d="M1057.6 706.5 H1073.4 V711.4 H1063.6 V721.4 H1057.6 Z" fill="none" stroke="#fff" stroke-width="1.3"/><rect x="1057.5" y="710.8" width="6" height="1.2" fill="#fff"/><rect x="1063" y="706.5" width="1.2" height="5" fill="#fff"/><rect x="1066" y="709" width="1" height="2" fill="#fff"/><rect x="1068" y="709" width="1" height="2" fill="#fff"/><rect x="1070" y="709" width="1" height="2" fill="#fff"/><rect x="1072" y="709" width="1" height="2" fill="#fff"/><rect x="1060.5" y="713" width="2.6" height="1" fill="#fff"/><rect x="1060.5" y="715" width="2.6" height="1" fill="#fff"/><rect x="1060.5" y="717" width="2.6" height="1" fill="#fff"/><rect x="1060.5" y="719" width="2.6" height="1" fill="#fff"/><rect x="1089" y="714" width="12" height="2" fill="#fff"/><rect x="1113" y="715" width="169" height="1" fill="#fff"/><rect x="1196.5" y="706.5" width="2.4" height="15" fill="#fff"/><rect x="1293.5" y="714" width="12.5" height="2" fill="#fff"/><rect x="1298.8" y="708.8" width="2" height="12.5" fill="#fff"/></svg>
<span class="t" style="left:1321.00px;top:705.00px;font-size:14px;line-height:20px;color:#fff;transform:scaleX(0.9215);transform-origin:0 0;">100%</span>
<div style="left:456px;top:105px;width:454px;height:510px;background:#f0f0f0;box-shadow:3px 4px 14px rgba(0,0,0,.36);"></div>
<div style="left:456px;top:105px;width:454px;height:31px;background:#fff;border-top:1px solid #86a866;"></div>
<span class="t" style="left:464.30px;top:113.00px;font-size:11.7px;line-height:16px;color:#000;transform:scaleX(0.9671);transform-origin:0 0;">DataSet Properties</span>
<div style="left:890px;top:113px;width:19px;height:19px;background:#c75050;"></div>
<svg style="left:890px;top:113px;" width="19" height="19" viewBox="0 0 19 19"><path d="M7 7.2 L12 12.2 M12 7.2 L7 12.2" stroke="#fff" stroke-width="1.7" fill="none"/></svg>
<div style="left:462px;top:164px;width:442px;height:414px;background:#fff;border:1px solid #acacac;"></div>
<div style="left:464px;top:145px;width:52px;height:20px;background:#f0f0f0;border:1px solid #acacac;border-bottom:none;background:linear-gradient(#f2f2f2,#ebebeb);"></div>
<span class="t" style="left:470.30px;top:147.00px;font-size:12.3px;line-height:17px;color:#111;transform:scaleX(0.9257);transform-origin:0 0;">General</span>
<div style="left:561px;top:145px;width:52px;height:20px;background:#f0f0f0;border:1px solid #acacac;border-bottom:none;background:linear-gradient(#f2f2f2,#ebebeb);"></div>
<span class="t" style="left:565.00px;top:147.00px;font-size:12.3px;line-height:17px;color:#111;letter-spacing:-0.056px;">Options</span>
<div style="left:613px;top:145px;width:43px;height:20px;background:#f0f0f0;border:1px solid #acacac;border-bottom:none;background:linear-gradient(#f2f2f2,#ebebeb);"></div>
<span class="t" style="left:618.30px;top:147.00px;font-size:12.3px;line-height:17px;color:#111;transform:scaleX(0.9706);transform-origin:0 0;">Filters</span>
<div style="left:656px;top:145px;width:71px;height:20px;background:#f0f0f0;border:1px solid #acacac;border-bottom:none;background:linear-gradient(#f2f2f2,#ebebeb);"></div>
<span class="t" style="left:661.30px;top:147.00px;font-size:12.3px;line-height:17px;color:#111;transform:scaleX(0.9597);transform-origin:0 0;">Parameters</span>
<div style="left:515px;top:142px;width:46px;height:23px;background:#fff;border:1px solid #acacac;border-bottom:none;"></div>
<span class="t" style="left:523.00px;top:146.00px;font-size:12.3px;line-height:17px;color:#111;transform:scaleX(0.9143);transform-origin:0 0;">Fields</span>
<div style="left:629px;top:136px;width:108px;height:11px;background:#1b1b1b;"></div>
<div style="left:668px;top:140px;width:30px;height:1px;background:#8c8c8c;"></div>
<div style="left:668px;top:143px;width:30px;height:1px;background:#8c8c8c;"></div>
<span class="t" style="left:471.40px;top:182.00px;font-size:13.3px;line-height:19px;color:#111;letter-spacing:0.217px;">Change query and calculated fields.</span>
<div style="left:472px;top:224px;width:50px;height:22px;background:#f7f3f1;border:1px solid #707070;"></div>
<span class="t" style="left:485.75px;top:227.00px;font-size:12.3px;line-height:17px;color:#111;letter-spacing:0.203px;">Add</span>
<div style="left:527px;top:224px;width:50px;height:22px;background:#f7f3f1;border:1px solid #707070;"></div>
<span class="t" style="left:534.50px;top:227.00px;font-size:12.3px;line-height:17px;color:#111;letter-spacing:-0.091px;">Delete</span>
<div style="left:582px;top:224px;width:30px;height:22px;background:#dadada;border:1px solid #707070;"></div>
<div style="left:617px;top:224px;width:30px;height:22px;background:#f4f4f4;border:1px solid #c3c3c3;"></div>
<svg style="left:0px;top:0px;" width="1366" height="728" viewBox="0 0 1366 728"><path d="M597 229.8 L602.0 234.8 L599.2 234.8 L599.2 239.8 L594.8 239.8 L594.8 234.8 L592.0 234.8 Z" fill="#2f8ef0"/><path d="M632 239.8 L637.0 234.8 L634.2 234.8 L634.2 229.8 L629.8 229.8 L629.8 234.8 L627.0 234.8 Z" fill="#333"/></svg>
<div style="left:472px;top:254px;width:410px;height:300px;background:#fff;border:1px solid #ababab;"></div>
<div style="left:475px;top:256px;width:404px;height:19px;background:#f0f0f0;"></div>
<span class="t" style="left:479.00px;top:259.00px;font-size:12.3px;line-height:17px;color:#111;transform:scaleX(0.9463);transform-origin:0 0;">Field Name</span>
<span class="t" style="left:669.00px;top:259.00px;font-size:12.3px;line-height:17px;color:#111;transform:scaleX(0.9341);transform-origin:0 0;">Field Source</span>
<div style="left:479px;top:278px;width:185px;height:22px;background:#fff;border:1px solid #ababab;"></div>
<div style="left:669px;top:278px;width:205px;height:22px;background:#fff;border:1px solid #ababab;"></div>
<span class="t" style="left:482.30px;top:280.00px;font-size:12px;line-height:17px;color:#111;transform:scaleX(0.9683);transform-origin:0 0;">Name</span>
<span class="t" style="left:672.30px;top:280.00px;font-size:12px;line-height:17px;color:#111;transform:scaleX(0.9683);transform-origin:0 0;">Name</span>
<div style="left:474px;top:302px;width:406px;height:26px;background:#e4f2fb;border:1px solid #7ec4ea;"></div>
<div style="left:479px;top:304px;width:185px;height:22px;background:#fff;border:1px solid #ababab;"></div>
<div style="left:669px;top:304px;width:205px;height:22px;background:#fff;border:1px solid #5aa7e6;"></div>
<span class="t" style="left:482.30px;top:306.00px;font-size:12px;line-height:17px;color:#111;transform:scaleX(0.8929);transform-origin:0 0;">Q1</span>
<span class="t" style="left:672.30px;top:306.00px;font-size:12px;line-height:17px;color:#111;transform:scaleX(0.8744);transform-origin:0 0;">QS1</span>
<div style="left:479px;top:330px;width:185px;height:22px;background:#fff;border:1px solid #ababab;"></div>
<div style="left:669px;top:330px;width:205px;height:22px;background:#fff;border:1px solid #ababab;"></div>
<span class="t" style="left:482.30px;top:332.00px;font-size:12px;line-height:17px;color:#111;transform:scaleX(0.9241);transform-origin:0 0;">Q2</span>
<span class="t" style="left:672.30px;top:332.00px;font-size:12px;line-height:17px;color:#111;transform:scaleX(0.8953);transform-origin:0 0;">QS2</span>
<div style="left:479px;top:356px;width:185px;height:22px;background:#fff;border:1px solid #ababab;"></div>
<div style="left:669px;top:356px;width:205px;height:22px;background:#fff;border:1px solid #ababab;"></div>
<span class="t" style="left:482.30px;top:358.00px;font-size:12px;line-height:17px;color:#111;transform:scaleX(0.9241);transform-origin:0 0;">Q3</span>
<span class="t" style="left:672.30px;top:358.00px;font-size:12px;line-height:17px;color:#111;transform:scaleX(0.8953);transform-origin:0 0;">QS3</span>
<div style="left:479px;top:382px;width:185px;height:22px;background:#fff;border:1px solid #ababab;"></div>
<div style="left:669px;top:382px;width:205px;height:22px;background:#fff;border:1px solid #ababab;"></div>
<span class="t" style="left:482.30px;top:384.00px;font-size:12px;line-height:17px;color:#111;transform:scaleX(0.9366);transform-origin:0 0;">Q4</span>
<span class="t" style="left:672.30px;top:384.00px;font-size:12px;line-height:17px;color:#111;transform:scaleX(0.9036);transform-origin:0 0;">QS4</span>
<div style="left:479px;top:408px;width:185px;height:22px;background:#fff;border:1px solid #ababab;"></div>
<div style="left:669px;top:408px;width:205px;height:22px;background:#fff;border:1px solid #ababab;"></div>
<span class="t" style="left:482.30px;top:410.00px;font-size:12px;line-height:17px;color:#111;letter-spacing:-0.032px;">Total</span>
<span class="t" style="left:672.30px;top:410.00px;font-size:12px;line-height:17px;color:#111;letter-spacing:-0.032px;">Total</span>
<div style="left:479px;top:434px;width:185px;height:22px;background:#fff;border:1px solid #ababab;"></div>
<div style="left:669px;top:434px;width:205px;height:22px;background:#fff;border:1px solid #ababab;"></div>
<span class="t" style="left:482.30px;top:436.00px;font-size:12px;line-height:17px;color:#111;transform:scaleX(0.9612);transform-origin:0 0;">AverageValue</span>
<div style="left:670px;top:435px;width:184px;height:20px;overflow:hidden;">
<span class="t" style="left:5.00px;top:3.00px;font-size:12.3px;line-height:17px;color:#111;transform:scaleX(0.9416);transform-origin:0 0;">=Avg(Fields!Total.Value, &quot;TopProdu</span>
</div>
<svg style="left:861px;top:441px;" width="7" height="6" viewBox="0 0 7 6"><path d="M1 1.2 L3.5 4.2 L6 1.2" stroke="#444" stroke-width="1" fill="none"/></svg>
<div style="left:474px;top:458px;width:406px;height:26px;background:#f6f6f6;border:1px solid #e9e9e9;"></div>
<div style="left:479px;top:460px;width:185px;height:22px;background:#fff;border:1px solid #ababab;"></div>
<div style="left:669px;top:460px;width:205px;height:22px;background:#fff;border:1px solid #ababab;"></div>
<span class="t" style="left:482.30px;top:462.00px;font-size:12px;line-height:17px;color:#111;letter-spacing:-0.034px;">MaximumValue</span>
<div style="left:670px;top:461px;width:184px;height:20px;overflow:hidden;">
<span class="t" style="left:5.00px;top:3.00px;font-size:12.3px;line-height:17px;color:#111;transform:scaleX(0.9446);transform-origin:0 0;">=Max(Fields!Q3.Value, &quot;TopProduc</span>
</div>
<svg style="left:861px;top:467px;" width="7" height="6" viewBox="0 0 7 6"><path d="M1 1.2 L3.5 4.2 L6 1.2" stroke="#444" stroke-width="1" fill="none"/></svg>
<div style="left:462px;top:586px;width:70px;height:22px;background:#f7f3f1;border:1px solid #707070;"></div>
<span class="t" style="left:485.00px;top:589.00px;font-size:12.3px;line-height:17px;color:#111;transform:scaleX(0.9487);transform-origin:0 0;">Help</span>
<div style="left:758px;top:586px;width:70px;height:22px;background:#f7f3f1;border:1px solid #3399ff;"></div>
<span class="t" style="left:784.75px;top:589.00px;font-size:12.3px;line-height:17px;color:#111;transform:scaleX(0.9279);transform-origin:0 0;">OK</span>
<div style="left:834px;top:586px;width:70px;height:22px;background:#f7f3f1;border:1px solid #707070;"></div>
<span class="t" style="left:851.25px;top:589.00px;font-size:12.3px;line-height:17px;color:#111;transform:scaleX(0.9273);transform-origin:0 0;">Cancel</span>
</body></html>
